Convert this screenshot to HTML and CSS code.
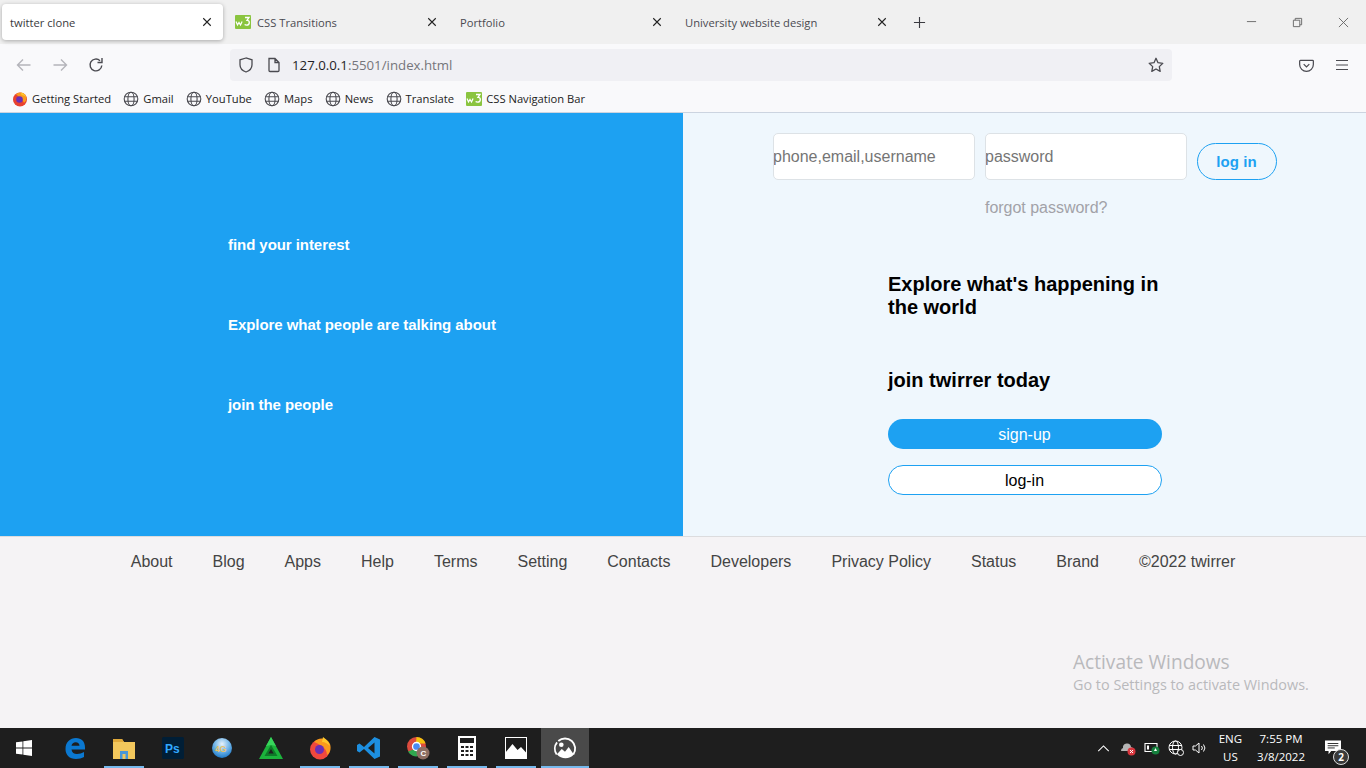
FILE: index.html
```html
<!DOCTYPE html>
<html lang="en">
<head>
<meta charset="utf-8">
<title>twitter clone</title>
<link rel="stylesheet" href="styles.css">
</head>
<body>
<svg class="defs" width="0" height="0" aria-hidden="true">
  <symbol id="x" viewBox="0 0 12 12"><path d="M1.5 1.5l9 9M10.5 1.5l-9 9" fill="none" stroke="currentColor" stroke-width="1.3"/></symbol>
  <symbol id="globe" viewBox="0 0 16 16"><g fill="none" stroke="#4a4a50" stroke-width="1.1"><circle cx="8" cy="8" r="6.8"/><ellipse cx="8" cy="8" rx="3.1" ry="6.8"/><path d="M1.4 5.8h13.2M1.4 10.2h13.2"/></g></symbol>
  <symbol id="w3" viewBox="0 0 16 16"><rect y="1" width="16" height="14" rx="1" fill="#8ac43f"/><path d="M1 7.500l1.500 3.500 1.500-2.500 1.500 2.500 1.600-3.500" fill="none" stroke="#fff" stroke-width="1.200"/><path d="M10 3.500h4l-2 2.800c1.500 0 2.300.8 2.300 2.100 0 1.700-1.300 2.800-2.800 2.800-.8 0-1.400-.2-1.900-.6" fill="none" stroke="#fff" stroke-width="1.300"/></symbol>
</svg>
<div class="browser">
  <div class="tabbar">
    <div class="tab active"><span class="tab-title">twitter clone</span><svg class="tab-x"><use href="#x"/></svg></div>
    <div class="tab"><svg class="fav"><use href="#w3"/></svg><span class="tab-title">CSS Transitions</span><svg class="tab-x"><use href="#x"/></svg></div>
    <div class="tab"><span class="tab-title">Portfolio</span><svg class="tab-x"><use href="#x"/></svg></div>
    <div class="tab"><span class="tab-title">University website design</span><svg class="tab-x"><use href="#x"/></svg></div>
    <svg class="newtab" viewBox="0 0 14 14"><path d="M7 1v12M1 7h12" stroke="#3a3a40" stroke-width="1.2" fill="none"/></svg>
    <div class="winctl">
      <svg viewBox="0 0 12 12"><path d="M1 5h10" stroke="#666" stroke-width="1" fill="none"/></svg>
      <svg viewBox="0 0 12 12"><path d="M1.500 3.500h7v7h-7zM3.500 3.500v-2h7v7h-2" stroke="#666" stroke-width="1" fill="none"/></svg>
      <svg viewBox="0 0 12 12"><path d="M1 1l10 10M11 1l-10 10" stroke="#666" stroke-width="1" fill="none"/></svg>
    </div>
  </div>
  <div class="toolbar">
    <svg class="tb-ico" viewBox="0 0 16 16"><path d="M14.500 8h-13M7 2.500L1.500 8 7 13.500" fill="none" stroke="#b4b4ba" stroke-width="1.400"/></svg>
    <svg class="tb-ico" viewBox="0 0 16 16"><path d="M1.500 8h13M9 2.500L14.500 8 9 13.500" fill="none" stroke="#b4b4ba" stroke-width="1.400"/></svg>
    <svg class="tb-ico" viewBox="0 0 16 16"><path d="M13.800 8.500A5.900 5.900 0 1 1 12 3.700M14 1v4.500H9.500" fill="none" stroke="#4a4a50" stroke-width="1.400"/></svg>
    <div class="urlbar">
      <svg class="shield" viewBox="0 0 16 16"><path d="M8 1L2 2.800v5C2 11.500 5 14 8 15c3-1 6-3.500 6-7.200v-5z" fill="none" stroke="#4a4a50" stroke-width="1.300"/></svg>
      <svg class="page" viewBox="0 0 14 16"><path d="M2 1.500h6l4 4v8a1 1 0 0 1-1 1H3a1 1 0 0 1-1-1zM8 1.500v4h4" fill="none" stroke="#4a4a50" stroke-width="1.300"/></svg>
      <span class="url"><b>127.0.0.1</b>:5501/index.html</span>
      <svg class="star" viewBox="0 0 16 16"><path d="M8 1.300l2 4.400 4.800.6-3.500 3.300.9 4.800L8 12l-4.200 2.400.9-4.800L1.200 6.300 6 5.700z" fill="none" stroke="#4a4a50" stroke-width="1.300" stroke-linejoin="round"/></svg>
    </div>
    <svg class="pocket" viewBox="0 0 16 16"><path d="M1.500 2.500h13a.8.8 0 0 1 .8.8V7a7.300 7.300 0 0 1-14.600 0V3.300a.8.8 0 0 1 .8-.8zM5 6.500l3 3 3-3" fill="none" stroke="#4a4a50" stroke-width="1.300"/></svg>
    <svg class="menu" viewBox="0 0 14 12"><path d="M1 1.500h12M1 6h12M1 10.500h12" stroke="#4a4a50" stroke-width="1.200" fill="none"/></svg>
  </div>
  <div class="bookmarks">
    <span class="bm"><svg class="bm-ico" viewBox="0 0 16 16"><circle cx="8" cy="8.500" r="7" fill="#e8412f"/><path d="M4 3.500C6 .5 12 .5 14 5c1.500 4-1 6-2 7-1-3-3-5-8-8.500z" fill="#fb9a1e"/><circle cx="7.500" cy="8.500" r="3.300" fill="#6a2fb5"/><path d="M9 1.500c2 .5 4 2 5 4-1.500-1-3-1.500-4.500-1.500z" fill="#ffc82c"/></svg>Getting Started</span>
    <span class="bm"><svg class="bm-ico"><use href="#globe"/></svg>Gmail</span>
    <span class="bm"><svg class="bm-ico"><use href="#globe"/></svg>YouTube</span>
    <span class="bm"><svg class="bm-ico"><use href="#globe"/></svg>Maps</span>
    <span class="bm"><svg class="bm-ico"><use href="#globe"/></svg>News</span>
    <span class="bm"><svg class="bm-ico"><use href="#globe"/></svg>Translate</span>
    <span class="bm"><svg class="bm-ico"><use href="#w3"/></svg>CSS Navigation Bar</span>
  </div>
</div>

<main class="hero">
  <section class="left">
    <p>find your interest</p>
    <p>Explore what people are talking about</p>
    <p>join the people</p>
  </section>
  <section class="right">
    <div class="login">
      <div class="fields">
        <input class="field" type="text" placeholder="phone,email,username">
        <input class="field" type="password" placeholder="password">
        <button class="login-btn" type="button">log in</button>
      </div>
      <a class="forgot">forgot password?</a>
    </div>
    <div class="join">
      <h1>Explore what's happening in the world</h1>
      <h2>join twirrer today</h2>
      <button class="pill primary" type="button">sign-up</button>
      <button class="pill outline" type="button">log-in</button>
    </div>
  </section>
</main>

<footer class="foot">
  <nav class="foot-links">
    <a>About</a><a>Blog</a><a>Apps</a><a>Help</a><a>Terms</a><a>Setting</a><a>Contacts</a><a>Developers</a><a>Privacy Policy</a><a>Status</a><a>Brand</a><a>©2022 twirrer</a>
  </nav>
  <div class="activate"><div class="a1">Activate Windows</div><div class="a2">Go to Settings to activate Windows.</div></div>
</footer>

<div class="taskbar">
  <div class="start"><svg viewBox="0 0 16 16" width="16" height="16"><path d="M0 2.300l6.500-.9v6.200H0zM7.300 1.300L16 0v7.600H7.300zM0 8.400h6.500v6.200L0 13.700zM7.300 8.400H16V16l-8.700-1.200z" fill="#fff"/></svg></div>
  <div class="task"><svg viewBox="0 0 24 24"><path d="M2.500 13C2.500 6 7 2 13 2c5.500 0 9 3.500 9 9.500v2H8.500c.3 3 2.500 4.500 5.500 4.500 2.500 0 5-.8 7-2v5c-2 1.200-5 2-8 2C6.500 23 2.500 19 2.500 13zM8.500 9.700h8c-.1-2.200-1.500-3.500-3.800-3.500-2.200 0-3.800 1.400-4.200 3.500z" fill="#0b78d0"/></svg></div>
  <div class="task on"><svg viewBox="0 0 24 24"><path d="M1 3h9l2 3h11v17H1z" fill="#f2c75c"/><path d="M1 3h9l2 3H1z" fill="#e0a93a"/><path d="M8 15h8v8h-2.500v-5h-3v5H8z" fill="#4a97d8"/></svg></div>
  <div class="task"><svg viewBox="0 0 24 24"><rect x="1" y="1" width="22" height="22" rx="1.500" fill="#001e36"/><text x="4" y="17" class="ps">Ps</text></svg></div>
  <div class="task"><svg viewBox="0 0 24 24"><defs><radialGradient id="ball" cx="50%" cy="30%" r="70%"><stop offset="0" stop-color="#e8f3fb"/><stop offset=".55" stop-color="#6fb4e8"/><stop offset="1" stop-color="#1c78c8"/></radialGradient></defs><circle cx="12" cy="12" r="10" fill="url(#ball)"/><text x="5" y="15.500" class="g4">4G</text></svg></div>
  <div class="task"><svg viewBox="0 0 24 24"><path d="M12 1L0 23h24z" fill="#1cb33c"/><path d="M12 1L7 10l5-1 5 1z" fill="#38d65c"/><path d="M12 9L5.500 20h13z" fill="#0d7a28"/><path d="M12 13l-2.700 4.500h5.400z" fill="#1e1e1e"/></svg></div>
  <div class="task on"><svg viewBox="0 0 24 24"><circle cx="12" cy="13.500" r="10" fill="#f0483e"/><path d="M6 6c4-5 13-5 16 2 1.500 5 0 9-3 11 0-5-3-9-13-13z" fill="#fb9a1e"/><path d="M15 1c3 2 6 5 7 9-2-2-5-4-8-4z" fill="#ffc82c"/><circle cx="11.500" cy="13.500" r="4.500" fill="#6a2fb5"/></svg></div>
  <div class="task on"><svg viewBox="0 0 24 24"><path d="M17.500 1L23 3.500v17L17.500 23 7 13l-4.500 3.500L0 15V9l2.500-1.500L7 11zM17.500 6.500L11 12l6.500 5.500z" fill="#1d8fe0"/></svg></div>
  <div class="task on"><svg viewBox="0 0 24 24"><circle cx="10.500" cy="10.500" r="9.500" fill="#dd4b3e"/><path d="M2 15.500A9.500 9.500 0 0 0 13 20l4-7H9z" fill="#2fa84f"/><path d="M10.500 1a9.500 9.500 0 0 1 9 6.500H10z" fill="#f4c20d"/><circle cx="10.500" cy="10.500" r="4" fill="#4a8af4" stroke="#fff" stroke-width="1.300"/><circle cx="17" cy="17" r="6.500" fill="#8d6e63"/><text x="14.500" y="20" class="chr">C</text></svg></div>
  <div class="task on"><svg viewBox="0 0 18 24" class="calc"><path fill-rule="evenodd" d="M0 0h18v24H0zM2 2v5h14V2zM3 10v2h3v-2zM7.500 10v2h3v-2zM12 10v2h3v-2zM3 14v2h3v-2zM7.500 14v2h3v-2zM12 14v2h3v-2zM3 18v2h3v-2zM7.500 18v2h3v-2zM12 18v2h3v-2z" fill="#fff"/></svg></div>
  <div class="task on"><svg viewBox="0 0 24 24"><rect x="1.500" y="1.500" width="21" height="21" fill="#1d1d1d" stroke="#fff" stroke-width="1"/><path d="M1.500 22.500v-6L8.500 8l5 6 3.500-3 5.500 6v5.500z" fill="#fff"/></svg></div>
  <div class="task active"><svg viewBox="0 0 26 26"><path d="M4 20a11 11 0 1 1 18 0" fill="none" stroke="#fff" stroke-width="2" stroke-dasharray="14 2 40"/><path d="M4 20l5.500-6 3.500 3 4-5 5.500 8a12 12 0 0 1-18 0z" fill="#fff"/><circle cx="9" cy="9.500" r="2.500" fill="#fff"/></svg></div>
  <div class="tray">
    <svg class="t-caret" viewBox="0 0 14 8"><path d="M1 7l6-6 6 6" fill="none" stroke="#fff" stroke-width="1.200"/></svg>
    <svg class="t-ico" viewBox="0 0 16 16"><path d="M1 11a3 3 0 0 1 2-3 4 4 0 0 1 8-1 3 3 0 0 1 2 4z" fill="#b5b5b5"/><circle cx="11.500" cy="11.500" r="4" fill="#d9363e"/><path d="M10 10l3 3M13 10l-3 3" stroke="#fff" stroke-width="1"/></svg>
    <svg class="t-ico" viewBox="0 0 16 16"><path d="M1 3.500h12v8H1z" fill="none" stroke="#fff" stroke-width="1.100"/><path d="M3 5.500h2v4H3z" fill="#fff"/><circle cx="11.500" cy="10.500" r="4" fill="#15803d"/><path d="M11.500 8l-1.500 3h3z" fill="#fff"/></svg>
    <svg class="t-ico" viewBox="0 0 16 16"><g fill="none" stroke="#fff" stroke-width="1"><circle cx="7.500" cy="7.500" r="6.500"/><ellipse cx="7.500" cy="7.500" rx="3" ry="6.500"/><path d="M1 5.500h13M1 9.500h13"/></g><circle cx="12.500" cy="12.500" r="3" fill="#1d1d1d" stroke="#fff" stroke-width="1"/></svg>
    <svg class="t-ico" viewBox="0 0 16 16"><path d="M1 6h2.500L7 3v10l-3.500-3H1z" fill="none" stroke="#fff" stroke-width="1"/><path d="M9.500 6a3 3 0 0 1 0 4M11.500 4.500a5.500 5.500 0 0 1 0 7" fill="none" stroke="#fff" stroke-width="1"/></svg>
    <div class="lang"><span>ENG</span><span>US</span></div>
    <div class="clock"><span>7:55 PM</span><span>3/8/2022</span></div>
    <div class="notif">
      <svg viewBox="0 0 18 16" width="16" height="15"><path d="M0 0h18v12H7l-3 3.500V12H0z" fill="#fff"/><path d="M3 3.500h12M3 6h12M3 8.500h8" stroke="#1d1d1d" stroke-width="1"/></svg>
      <span class="badge">2</span>
    </div>
  </div>
</div>
</body>
</html>
```
FILE: styles.css
```css
* { box-sizing: border-box; }
html, body { margin: 0; padding: 0; }
body {
  width: 1366px;
  height: 768px;
  overflow: hidden;
  display: flex;
  flex-direction: column;
  font-family: "Liberation Sans", Arial, sans-serif;
  background: #f5f3f5;
}
.defs { position: absolute; }

/* browser chrome */
.browser { font-family: "Open Sans", "Noto Sans", sans-serif; color: #2b2a33; height: 113px; flex: none; }
.tabbar { height: 44px; background: #f0f0f0; display: flex; align-items: center; padding-left: 2px; }
.tab { width: 225px; height: 36px; display: flex; align-items: center; padding: 0 10px 0 13px; font-size: 11.200px; color: #4a4a50; }
.tab.active { width: 221px; margin-right: -1px; padding: 0 11px 0 8px; background: #fff; border-radius: 4px; box-shadow: 0 1px 4px rgba(0,0,0,.3); color: #3a3a40; }
.tab-title { flex: 1; white-space: nowrap; }
.fav { width: 16px; height: 16px; margin-right: 6px; }
.tab-x { width: 10px; height: 10px; color: #222; flex: none; }
.newtab { width: 13px; height: 13px; margin-left: 16px; }
.winctl { margin-left: auto; display: flex; gap: 35px; padding-right: 17px; }
.winctl svg { width: 11px; height: 11px; }

.toolbar { height: 42px; background: #f9f9fb; display: flex; align-items: center; padding: 0 16px; }
.tb-ico { width: 16px; height: 16px; margin-right: 20px; flex: none; }
.urlbar { width: 942px; height: 32px; margin-left: 106px; background: #f0f0f4; border-radius: 4px; display: flex; align-items: center; padding: 0 8px; flex: none; }
.shield { width: 16px; height: 16px; margin-right: 13px; }
.page { width: 14px; height: 16px; margin-right: 11px; }
.url { flex: 1; font-size: 13.250px; color: #75757b; }
.url b { font-weight: 400; color: #1f1f24; }
.star { width: 16px; height: 16px; }
.pocket { width: 15px; height: 15px; margin-left: 127px; }
.menu { width: 14px; height: 12px; margin-left: 21px; }

.bookmarks { height: 27px; background: #f9f9fb; border-bottom: 1px solid #ccd4e0; display: flex; align-items: center; gap: 12.200px; padding: 0 0 1px 12px; font-size: 11.200px; color: #222; }
.bm { display: flex; align-items: center; white-space: nowrap; }
.bm-ico { width: 16px; height: 16px; margin-right: 4px; }

/* main */
.hero { height: 423px; flex: none; display: flex; }
.left { width: 683px; background: #1da1f2; padding: 123px 0 0 228px; color: #fff; font-weight: 700; font-size: 15px; line-height: 17px; letter-spacing: -.06px; }
.left p { margin: 0 0 63px; }
.right { width: 683px; background: #eff7fd; }
.login { padding: 20px 0 0 90px; }
.fields { display: flex; align-items: flex-end; gap: 10px; }
.field { width: 202px; height: 47px; padding: 0 0 0 0; border: 1px solid #dde2e6; border-radius: 5px; background: #fff; font: 16px "Liberation Sans", Arial, sans-serif; text-indent: -1px; }
.field::placeholder { color: #757575; opacity: 1; }
.login-btn { width: 80px; height: 37px; padding: 0 1px 0 0; border: 1px solid #1da1f2; border-radius: 19px; background: transparent; color: #1da1f2; font: 700 15px "Liberation Sans", Arial, sans-serif; letter-spacing: .05px; }
.forgot { display: block; margin: 19px 0 0 212px; font-size: 16px; line-height: 18px; color: #a2a2a8; letter-spacing: -.02px; }
.join { width: 274px; margin: 56px 0 0 205px; }
.join h1 { margin: 0; font-size: 20px; line-height: 23px; font-weight: 700; color: #000; }
.join h2 { margin: 50px 0 0; font-size: 20px; line-height: 23px; font-weight: 700; color: #000; }
.pill { display: block; width: 274px; height: 30px; border-radius: 15px; font: 16px "Liberation Sans", Arial, sans-serif; padding: 2px 1px 0 0; }
.primary { margin-top: 27px; background: #1da1f2; border: 0; color: #fff; }
.outline { margin-top: 16px; background: #fff; border: 1px solid #1da1f2; color: #000; }

/* footer */
.foot { flex: 1; position: relative; border-top: 1px solid #dcdcde; background: #f5f3f5; }
.foot-links { display: flex; justify-content: center; gap: 40px; padding-top: 16px; font-size: 16px; line-height: 18px; color: #444; }
.activate { position: absolute; left: 1073px; top: 112px; font-family: "Open Sans", "Noto Sans", sans-serif; color: #b9b9bc; }
.a1 { font-size: 19.100px; line-height: 26px; }
.a2 { font-size: 14.400px; line-height: 19px; }

/* taskbar */
.taskbar { height: 40px; flex: none; background: #1e1e1e; display: flex; align-items: stretch; font-family: "Open Sans", "Noto Sans", sans-serif; color: #fff; }
.start { width: 50px; display: flex; align-items: center; justify-content: center; padding-right: 3px; }
.task { width: 49px; display: flex; align-items: center; justify-content: center; position: relative; }
.task svg { width: 24px; height: 24px; }
.task .calc { width: 18px; height: 24px; }
.task.on::after { content: ""; position: absolute; left: 5px; right: 4px; bottom: 0; height: 2px; background: #76b9ed; }
.task.active { background: #4a4a4a; width: 48px; margin-left: 1px; box-shadow: inset 0 -2px 0 #76b9ed; }
.ps { font: 700 12px "Liberation Sans", Arial, sans-serif; fill: #31a8ff; }
.g4 { font: 700 8.500px "Liberation Sans", Arial, sans-serif; fill: #e8c36a; }
.chr { font: 700 8px "Liberation Sans", Arial, sans-serif; fill: #fff; }
.tray { margin-left: auto; display: flex; align-items: center; font-size: 11.500px; padding-right: 10px; }
.t-caret { width: 13px; height: 7px; margin-right: 10px; }
.t-ico { width: 16px; height: 16px; margin-right: 8px; }
.lang { display: flex; flex-direction: column; align-items: center; margin: 0 15px 0 3px; line-height: 18px; }
.clock { display: flex; flex-direction: column; align-items: center; line-height: 18px; margin-right: 18px; }
.notif { width: 33px; height: 40px; position: relative; padding: 12px 0 0 2px; }
.notif svg { display: block; }
.badge { position: absolute; left: 10px; top: 21px; width: 16px; height: 16px; border-radius: 50%; background: #3a3a3a; border: 1px solid #ddd; font-size: 10px; font-weight: 700; line-height: 14px; text-align: center; }
```
